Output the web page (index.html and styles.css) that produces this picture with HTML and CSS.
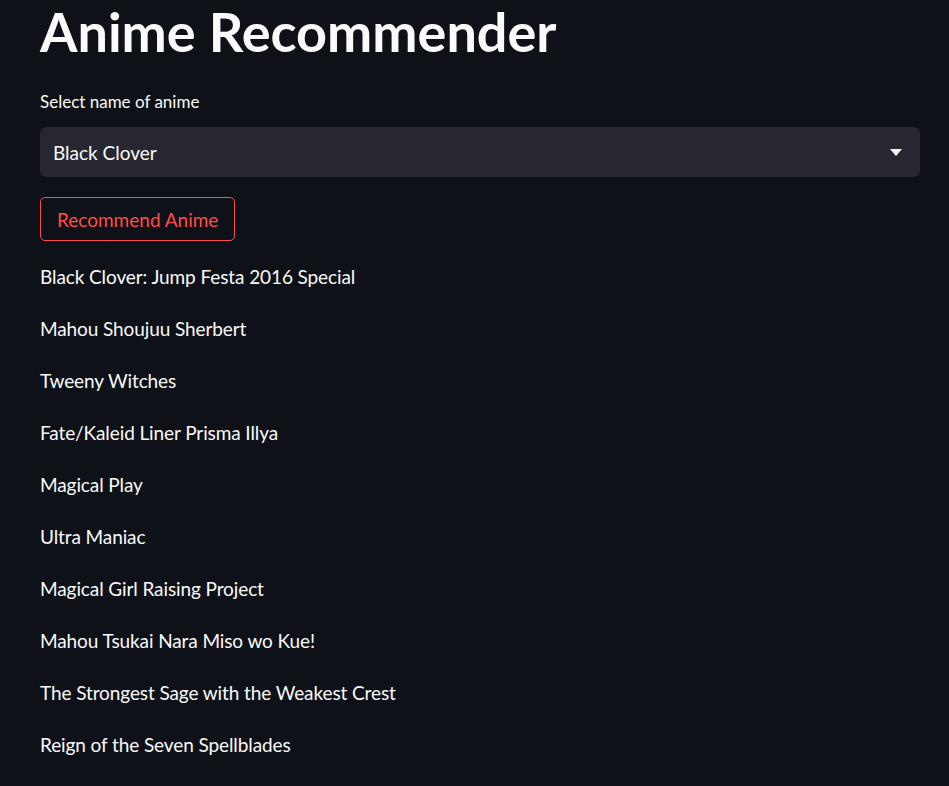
FILE: index.html
```html
<!DOCTYPE html>
<html>
<head>
<meta charset="utf-8">
<link rel="stylesheet" href="styles.css">
</head>
<body>
<main class="app">
  <h1 class="title">Anime Recommender</h1>
  <div class="field">
    <label class="label">Select name of anime</label>
    <div class="select">
      <span class="select-value">Black Clover</span>
      <svg class="caret" width="12" height="7" viewBox="0 0 12 7"><path d="M0 0 L12 0 L6 7 Z" fill="#fafafa"/></svg>
    </div>
  </div>
  <button class="btn">Recommend Anime</button>
  <div class="results">
    <p>Black Clover: Jump Festa 2016 Special</p>
    <p>Mahou Shoujuu Sherbert</p>
    <p>Tweeny Witches</p>
    <p>Fate/Kaleid Liner Prisma Illya</p>
    <p>Magical Play</p>
    <p>Ultra Maniac</p>
    <p>Magical Girl Raising Project</p>
    <p>Mahou Tsukai Nara Miso wo Kue!</p>
    <p>The Strongest Sage with the Weakest Crest</p>
    <p>Reign of the Seven Spellblades</p>
  </div>
</main>
</body>
</html>
```

FILE: styles.css
```css
html, body {
  margin: 0;
  padding: 0;
  background: #0e1117;
  color: #fafafa;
  font-family: "Lato", "Noto Sans", sans-serif;
  overflow: hidden;
}
.app {
  width: 880px;
  padding: 0 0 0 40px;
  display: flex;
  flex-direction: column;
  align-items: flex-start;
}
.title {
  margin: 0;
  font-size: 54px;
  font-weight: 700;
  line-height: 66px;
  margin-top: -1px;
}
.field {
  width: 100%;
  margin-top: 26px;
}
.label {
  display: block;
  font-size: 17px;
  line-height: 22px;
  margin-bottom: 14px;
}
.select {
  box-sizing: border-box;
  width: 100%;
  height: 50px;
  background: #262730;
  border-radius: 7px;
  display: flex;
  align-items: center;
  justify-content: space-between;
  padding: 0 18px 0 13px;
}
.select-value {
  font-size: 19px;
}
.caret {
  display: block;
}
.btn {
  margin-top: 20px;
  height: 44px;
  padding: 0 16px;
  background: transparent;
  border: 1px solid #ff4b4b;
  border-radius: 5px;
  color: #ff4b4b;
  font-family: inherit;
  font-size: 19px;
}
.results {
  margin-top: 20px;
  display: flex;
  flex-direction: column;
  gap: 20px;
}
.results p {
  margin: 0;
  font-size: 19px;
  letter-spacing: -0.1px;
  line-height: 32px;
}
```
